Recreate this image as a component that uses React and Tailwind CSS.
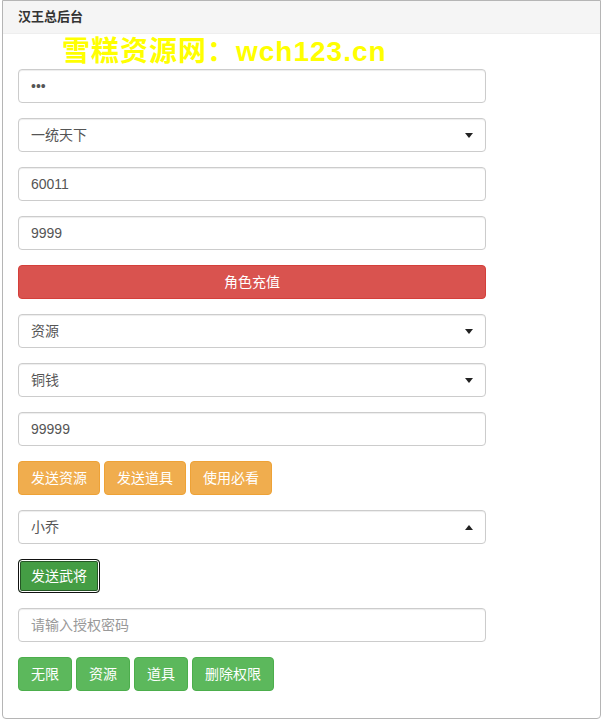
import React from 'react';

const font = { fontFamily: '"Liberation Sans", Arial, "Noto Sans CJK SC", sans-serif' };

const fieldCls =
  'block w-full h-[34px] px-3 text-[14px] text-[#555] bg-white border border-[#ccc] rounded-[4px] shadow-[inset_0_1px_1px_rgba(0,0,0,0.075)] outline-none';

const TextField = ({ value, placeholder }) => (
  <input
    className={fieldCls + ' placeholder:text-[#999]'}
    defaultValue={value}
    placeholder={placeholder}
  />
);

const SelectField = ({ value, up = false }) => (
  <div className="relative">
    <select className={fieldCls + ' appearance-none'} defaultValue={value}>
      <option>{value}</option>
    </select>
    {/* caret */}
    <span
      className={
        'pointer-events-none absolute right-[13px] top-[15px] w-0 h-0 border-l-[4px] border-r-[4px] border-l-transparent border-r-transparent ' +
        (up ? 'border-b-[5px] border-b-[#222] top-[14px]' : 'border-t-[5px] border-t-[#222]')
      }
    />
  </div>
);

const btnBase =
  'h-[34px] px-3 text-[14px] text-white border rounded-[4px] whitespace-nowrap';

const OrangeBtn = ({ children }) => (
  <button className={btnBase + ' bg-[#f0ad4e] border-[#eea236]'}>{children}</button>
);

const GreenBtn = ({ children }) => (
  <button className={btnBase + ' bg-[#5cb85c] border-[#4cae4c]'}>{children}</button>
);

const App = () => {
  return (
    <div className="w-[602px] h-[721px] bg-white pl-[2px] pr-[1px]" style={font}>
      <div className="h-[719px] border border-[#b5b5b5] rounded-b-[4px] bg-white">
        {/* Panel heading */}
        <div className="h-[33px] bg-[#f5f5f5] border-b border-[#eee] px-[15px] flex items-center">
          <span className="text-[13px] font-bold text-[#333]">汉王总后台</span>
        </div>

        {/* Body */}
        <div className="px-[15px]">
          {/* watermark */}
          <div className="h-[35px] flex items-center pl-[44px]">
            <span className="text-[28px] font-bold text-[#ffff00] leading-none tracking-[1px]">
              雪糕资源网：wch123.cn
            </span>
          </div>

          <div className="w-[468px] flex flex-col gap-[15px]">
            <TextField value="•••" />
            <SelectField value="一统天下" />
            <TextField value="60011" />
            <TextField value="9999" />
            <button className={btnBase + ' w-full bg-[#d9534f] border-[#d43f3a]'}>角色充值</button>
            <SelectField value="资源" />
            <SelectField value="铜钱" />
            <TextField value="99999" />
            <div className="flex gap-[4px]">
              <OrangeBtn>发送资源</OrangeBtn>
              <OrangeBtn>发送道具</OrangeBtn>
              <OrangeBtn>使用必看</OrangeBtn>
            </div>
            <SelectField value="小乔" up />
            <div className="flex">
              <button className="h-[34px] px-3 text-[14px] text-white bg-[#449d44] border border-[#111] rounded-[4px] shadow-[inset_0_0_0_1px_#fff,inset_0_0_0_2px_#255625] whitespace-nowrap">
                发送武将
              </button>
            </div>
            <TextField placeholder="请输入授权密码" />
            <div className="flex gap-[4px]">
              <GreenBtn>无限</GreenBtn>
              <GreenBtn>资源</GreenBtn>
              <GreenBtn>道具</GreenBtn>
              <GreenBtn>删除权限</GreenBtn>
            </div>
          </div>
        </div>
      </div>
    </div>
  );
};

export default App;
